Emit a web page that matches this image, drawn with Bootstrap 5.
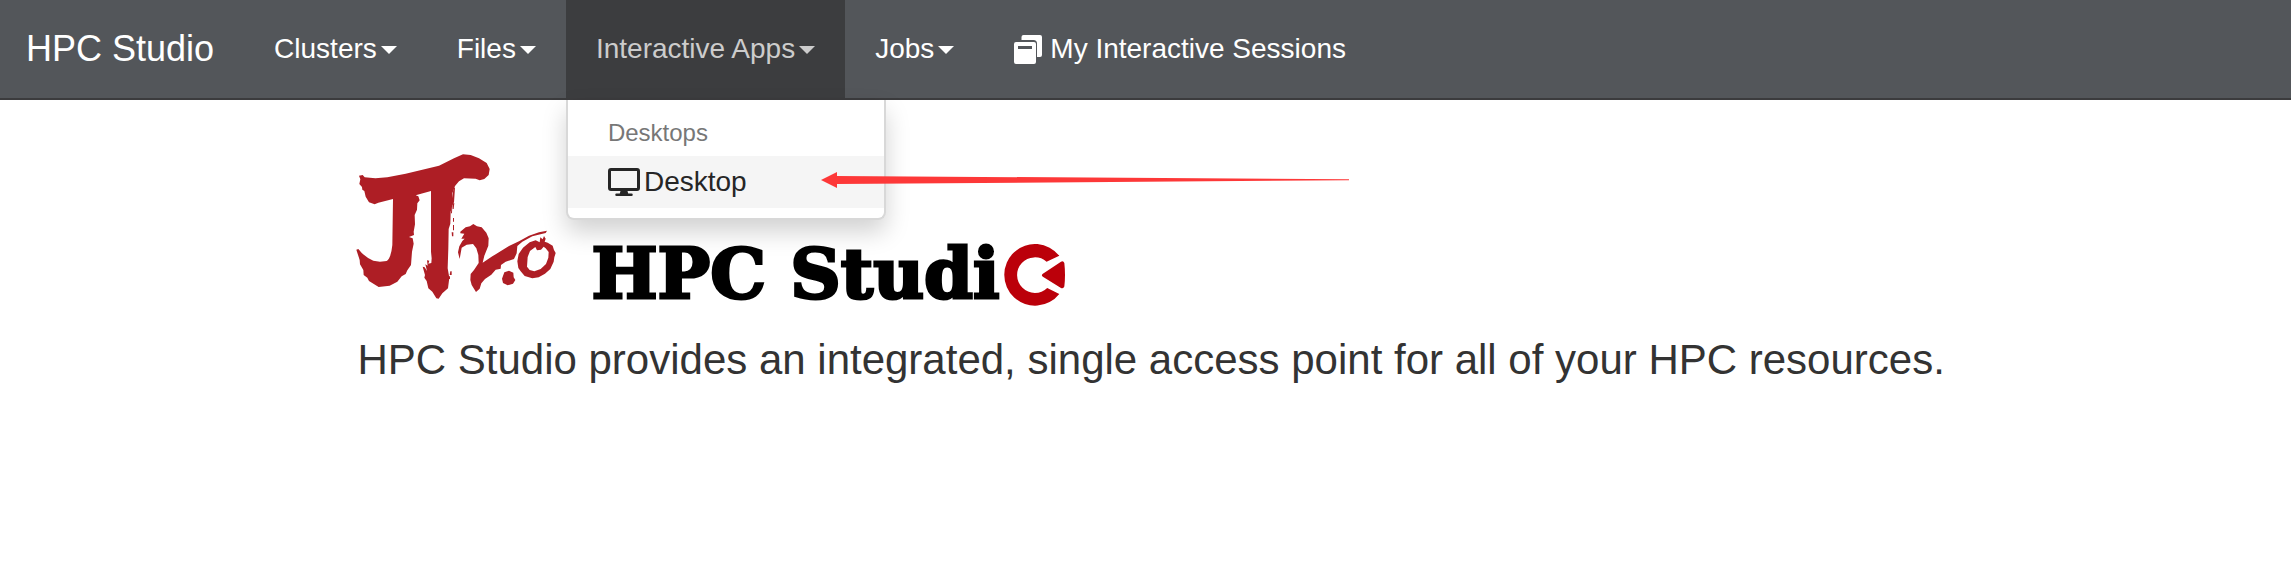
<!DOCTYPE html>
<html lang="en">
<head>
<meta charset="utf-8">
<meta name="viewport" content="width=device-width, initial-scale=1">
<title>HPC Studio</title>
<link href="https://cdn.jsdelivr.net/npm/bootstrap@5.3.0/dist/css/bootstrap.min.css" rel="stylesheet">
<style>
body { font-family: "Liberation Sans", Arial, sans-serif; color: #333; background: #fff; }
.studio-bar { background: #53565a; border-bottom: 2px solid #3b3b3d; }
.studio-bar .navbar-brand { font-size: 36px; line-height: 40px; color: #fff; padding: 0; margin: 0 0 0 26px; }
.studio-bar .navbar-nav { margin-left: 30px; }
.studio-bar .navbar-nav .nav-link { font-size: 28px; line-height: 40px; padding: 29px 30px; color: #fff; white-space: nowrap; }
.studio-bar .navbar-nav .nav-link.show { background: #3c3d3f; color: #ccc; }
.studio-bar .dropdown-toggle::after { margin-left: 4px; vertical-align: 4px; border-width: 8px 8px 0; }
.studio-bar .dropdown-menu[data-bs-popper] { min-width: 320px; margin: 2px 0 0; padding: 10px 0; border: 2px solid #d8d8d8; border-top: 0; border-radius: 0 0 8px 8px; box-shadow: 0 12px 24px rgba(0, 0, 0, .18); }
.studio-bar .dropdown-header { font-size: 24px; line-height: 34px; padding: 6px 40px; color: #777; }
.studio-bar .dropdown-item { font-size: 28px; line-height: 40px; padding: 6px 40px; color: #262626; }
.studio-bar .dropdown-item.picked { background: #f5f5f5; }
.pointer-arrow { left: 253px; top: 16px; pointer-events: none; }
.welcome { padding: 54px 0 0 15.6%; }
.word-mark { margin: 0 0 -7px 34px; gap: 3px; }
.word-logo { font: bold 70px/64px "DejaVu Serif", serif; color: #000; -webkit-text-stroke: 3px #000; }
.tagline { font-size: 42px; line-height: 48px; margin: 37px 0 0; }
</style>
</head>
<body>
<nav class="navbar navbar-expand studio-bar p-0">
  <a class="navbar-brand" href="#">HPC Studio</a>
  <ul class="navbar-nav">
    <li class="nav-item dropdown"><a class="nav-link dropdown-toggle" href="#" role="button" data-bs-toggle="dropdown">Clusters</a></li>
    <li class="nav-item dropdown"><a class="nav-link dropdown-toggle" href="#" role="button" data-bs-toggle="dropdown">Files</a></li>
    <li class="nav-item dropdown">
      <a class="nav-link dropdown-toggle show" href="#" role="button" data-bs-toggle="dropdown" aria-expanded="true">Interactive Apps</a>
      <ul class="dropdown-menu show" data-bs-popper="static">
        <li><h6 class="dropdown-header">Desktops</h6></li>
        <li class="position-relative">
          <a class="dropdown-item picked d-flex align-items-center" href="#">
            <svg class="me-1" width="32" height="28" viewBox="0 0 32 28" aria-hidden="true"><path fill="#262626" fill-rule="evenodd" d="M3 0H29a3 3 0 0 1 3 3V20a3 3 0 0 1-3 3H19.500L20.200 25.500H23.500a1.200 1.200 0 0 1 0 2.500H8.500a1.200 1.200 0 0 1 0-2.500H11.800L12.500 23H3a3 3 0 0 1-3-3V3a3 3 0 0 1 3-3ZM3 3V20H29V3Z"/></svg>Desktop</a>
          <svg class="pointer-arrow position-absolute" width="529" height="16" viewBox="0 0 529 16" aria-hidden="true"><path fill="#fd3838" d="M0 8 16 0V4L528 7.200V8.200L16 12V16Z"/></svg>
        </li>
      </ul>
    </li>
    <li class="nav-item dropdown"><a class="nav-link dropdown-toggle" href="#" role="button" data-bs-toggle="dropdown">Jobs</a></li>
    <li class="nav-item"><a class="nav-link d-flex align-items-center" href="#">
      <svg class="me-2" width="28" height="29" viewBox="0 0 28 29" aria-hidden="true"><path fill="#fff" fill-rule="evenodd" d="M9.500 0H26a2 2 0 0 1 2 2V20a2 2 0 0 1-2 2H23V8.500A3.500 3.500 0 0 0 19.500 5H7.500V2a2 2 0 0 1 2-2ZM2 7H20a2 2 0 0 1 2 2V27a2 2 0 0 1-2 2H2a2 2 0 0 1-2-2V9a2 2 0 0 1 2-2ZM4 11V14H18V11Z"/></svg>My Interactive Sessions</a></li>
  </ul>
</nav>

<main class="welcome">
  <div class="d-flex align-items-end">
    <svg width="200" height="145" viewBox="34 27 600 435" overflow="visible" role="img" aria-label="Brush logo">
      <g fill="#ae1e25">
        <path d="M40 92 51 90 57 97Q88 102 125 97L180 86 280 62 325 40 352 28 375 30 400 40 423 54 432 72 429 90 416 102 402 106 390 101 355 100 340 109 328 123 320 145 319 185 315 200 314 236 309 252 308 310 306 370 311 398 307 430 290 445 279 461 272 460 260 440 248 430 243 408 236 398 238 390 231 365 237 367 244 378 239 358 246 362 244 346 251 347 248 356 257 354 258 340 256 320 256 138 210 151 218 154 222 166 215 175 214 194 207 210 208 238 204 260 205 270 190 276 201 280 204 296 199 320 196 360 185 376 180 387 168 394 155 410 132 422 99 426 70 408 65 398 54 390 53 375 43 358 42 345 32 314 38 312Q55 335 83 347L103 350 123 348Q136 340 140 300L142 162 98 173 87 178 70 172 60 155 56 138 50 134 49 126 41 117 44 103Z"/>
        <path d="M324 128 328 128 325 172 320 180 319 205 316 205 319 160ZM321 176 326 174 324 192 321 192ZM322 219H325V230H322ZM322 240H325V256H322ZM318 262H323V274H319ZM314 379H318V390H312ZM308 394H313V402H308Z"/>
        <path d="M344 260 360 247 373 244 383 237 394 244 408 247 422 263 429 280 428 302 416 332 411 353 440 334 490 303 520 289 550 272 580 262 604 257 600 264 560 274 530 290 515 303 513 325 505 342 480 350 466 360 465 371 450 374 437 389 418 402 407 415 402 431 391 441 378 420 374 405 375 387 385 375 399 354 398 330 392 310 382 297 363 299 348 308 342 342 337 322 341 304 350 288 357 281 347 281 356 266 344 265Z"/>
        <path d="M476 382 490 377 503 383 504 397 509 405 502 416 486 421 472 414 469 401Z"/>
        <path fill-rule="evenodd" d="M515 349 519 327 532 308 552 292 570 286 582 292 584 277 591 283 595 273 600 281 597 290 606 293 621 302 625 315 630 324 626 337 624 350 614 372 598 386 579 397 560 400 537 393 525 379 518 369ZM544 365 552 375 566 379 585 372 601 357 608 338 609 321 600 310 594 305 586 314 574 316 569 306 553 318 546 336Z"/>
      </g>
    </svg>
    <div class="word-mark d-flex align-items-end">
      <span class="word-logo">HPC Studi</span>
      <svg width="62" height="62" viewBox="1270 27 185 185" role="img" aria-label="o"><path fill="#bb000a" d="M1438 62A92 92 0 1 0 1438 176L1402 158A53 53 0 1 1 1400 80ZM1389 116 1443 80Q1450 76 1453 84Q1457 120 1453 154Q1450 162 1443 158L1389 125Q1383 120 1389 116Z"/></svg>
    </div>
  </div>
  <p class="tagline">HPC Studio provides an integrated, single access point for all of your HPC resources.</p>
</main>
<script src="https://cdn.jsdelivr.net/npm/bootstrap@5.3.0/dist/js/bootstrap.bundle.min.js"></script>
</body>
</html>
